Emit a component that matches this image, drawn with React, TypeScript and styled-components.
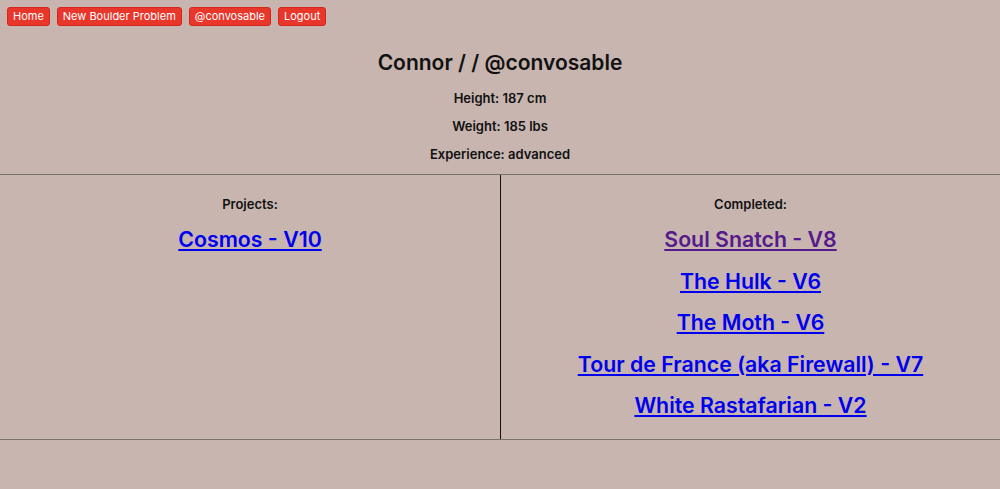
import React from "react";
import styled, { createGlobalStyle } from "styled-components";

const Global = createGlobalStyle`
  html, body { margin: 0; padding: 0; background: #c8b5af; }
  body { font-family: Inter, "Noto Sans", sans-serif; color: #111; }
`;

const Page = styled.div`
  min-height: 489px;
  background: #c8b5af;
`;

const Nav = styled.nav`
  display: flex;
  gap: 7px;
  padding: 7px 7px 0 7px;
  height: 20px;
`;

const NavButton = styled.button`
  font-family: Inter, sans-serif;
  font-size: 11px;
  line-height: 17px;
  height: 19px;
  padding: 0 5px;
  color: #fff;
  background: #e8362b;
  border: 1px solid #d4261d;
  border-radius: 3px;
  cursor: pointer;
`;

const Header = styled.header`
  display: flex;
  flex-direction: column;
  align-items: center;
  padding-top: 23px;
  padding-bottom: 6px;
`;

const Title = styled.h1`
  margin: 0 0 8px 0;
  font-size: 21px;
  line-height: 26px;
  font-weight: 600;
`;

const Stat = styled.p`
  margin: 0;
  font-size: 13px;
  line-height: 28px;
  font-weight: 600;
`;

const Divider = styled.hr`
  margin: 0;
  border: none;
  border-top: 1px solid #7c706c;
  height: 0;
`;

const Columns = styled.section`
  display: grid;
  grid-template-columns: 501px 1fr;
  height: 264px;
`;

const Column = styled.div<{ $left?: boolean }>`
  display: flex;
  flex-direction: column;
  align-items: center;
  padding-top: 21px;
  border-right: ${(p) => (p.$left ? "1px solid #111" : "none")};
`;

const ColumnTitle = styled.h3`
  margin: 0 0 12px 0;
  font-size: 13px;
  line-height: 17px;
  font-weight: 600;
`;

const ClimbLink = styled.a<{ $visited?: boolean }>`
  font-size: 21.3px;
  line-height: 28px;
  font-weight: 600;
  color: ${(p) => (p.$visited ? "#551a8b" : "#0000ee")};
  text-decoration: underline;
  margin-bottom: 13.5px;
`;

const projects = ["Cosmos - V10"];
const completed = [
  { name: "Soul Snatch - V8", visited: true },
  { name: "The Hulk - V6" },
  { name: "The Moth - V6" },
  { name: "Tour de France (aka Firewall) - V7" },
  { name: "White Rastafarian - V2" },
];

export default function App() {
  return (
    <Page>
      <Global />
      <Nav>
        <NavButton>Home</NavButton>
        <NavButton>New Boulder Problem</NavButton>
        <NavButton>@convosable</NavButton>
        <NavButton>Logout</NavButton>
      </Nav>
      <Header>
        <Title>Connor / / @convosable</Title>
        <Stat>Height: 187 cm</Stat>
        <Stat>Weight: 185 lbs</Stat>
        <Stat>Experience: advanced</Stat>
      </Header>
      <Divider />
      <Columns>
        <Column $left>
          <ColumnTitle>Projects:</ColumnTitle>
          {projects.map((p) => (
            <ClimbLink key={p} href="#">{p}</ClimbLink>
          ))}
        </Column>
        <Column>
          <ColumnTitle>Completed:</ColumnTitle>
          {completed.map((c) => (
            <ClimbLink key={c.name} href="#" $visited={c.visited}>{c.name}</ClimbLink>
          ))}
        </Column>
      </Columns>
      <Divider />
    </Page>
  );
}
